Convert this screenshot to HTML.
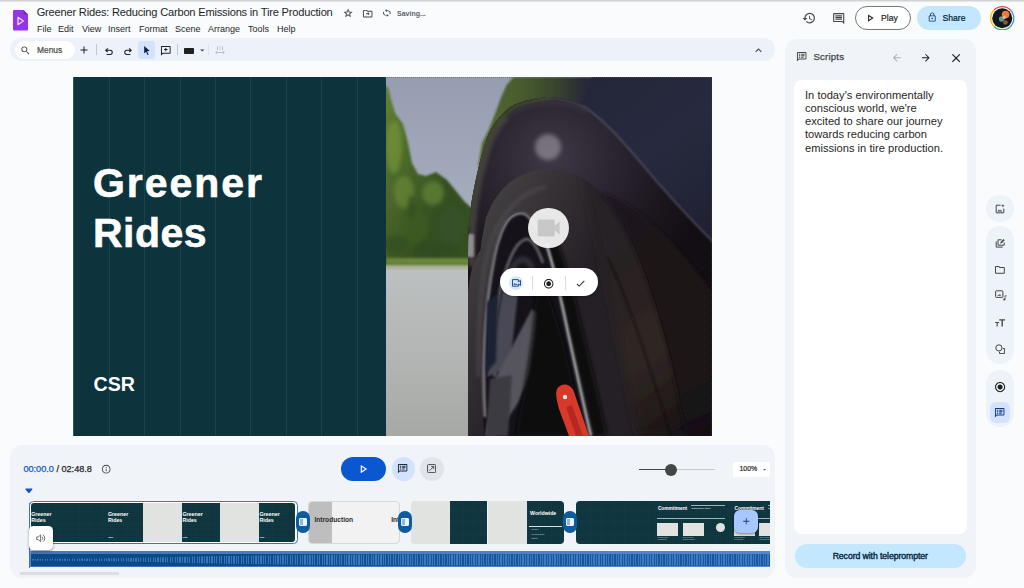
<!DOCTYPE html>
<html lang="en">
<head>
<meta charset="utf-8">
<title>Greener Rides: Reducing Carbon Emissions in Tire Production</title>
<style>
*{box-sizing:border-box;margin:0;padding:0}
html,body{width:1024px;height:588px;overflow:hidden;background:#f9fbfd;font-family:"Liberation Sans",sans-serif;color:#1f1f1f}
.abs{position:absolute}
#app{position:relative;width:1024px;height:588px;overflow:hidden;background:#f9fbfd}
#topline{left:0;top:0;width:1024px;height:2px;background:linear-gradient(180deg,#cfcfcf 0,#d6d6d6 45%,#f1f2f4 100%)}
#title{left:36.7px;top:5.1px;font-size:11.1px;line-height:14px;white-space:nowrap;color:#1f1f1f;letter-spacing:-0.2px}
.menu{top:23.7px;font-size:9px;line-height:11px;color:#1f1f1f;white-space:nowrap}
#toolbar{left:10.3px;top:37.6px;width:764.4px;height:23.4px;border-radius:12px;background:#edf2fa}
#menus{left:15px;top:41px;width:60px;height:18px;border-radius:9px;background:#fff}
#menus span{position:absolute;left:22px;top:3.5px;font-size:8.4px;line-height:11px;color:#444746;-webkit-text-stroke:0.2px #444746}
.sep{width:1px;height:11px;top:44px;background:#c7c7c7}
#cursorbox{left:138px;top:41px;width:17px;height:18px;border-radius:3px;background:#d3e3fd}
#saving{left:397px;top:8.6px;font-size:7px;line-height:10px;color:#5f6368;font-weight:bold;white-space:nowrap}
#play{left:855px;top:6px;width:56px;height:24px;border-radius:12px;border:1px solid #747775;background:#fff}
#play span{position:absolute;left:25px;top:4.8px;font-size:8.6px;-webkit-text-stroke:0.2px #1f1f1f;line-height:12px;color:#1f1f1f}
#share{left:917px;top:6px;width:64px;height:24px;border-radius:12px;background:#c2e7ff}
#share span{position:absolute;left:25.5px;top:5.5px;font-size:8.6px;-webkit-text-stroke:0.2px #001d35;line-height:12px;color:#001d35}
#canvas{left:73px;top:77px;width:638.5px;height:359px;background:#0d343d;overflow:hidden}
#h1{left:20px;top:80.85px;-webkit-text-stroke:0.6px #fff;font-size:41px;line-height:50.5px;font-weight:bold;color:#fff;white-space:nowrap}
#csr{left:20.5px;top:296.1px;font-size:19.6px;line-height:22px;font-weight:bold;color:#fff}
#tl{left:10px;top:445px;width:765px;height:133px;border-radius:12px;background:#f0f4f9}
#sp{left:785px;top:38.7px;width:190.7px;height:539.3px;border-radius:12px;background:#f0f4f9}
#sbox{left:794px;top:80px;width:172.5px;height:454px;border-radius:8px;background:#fff}
#stext{left:805px;top:88.5px;width:160px;white-space:nowrap;font-size:11.15px;line-height:13.3px;color:#1f1f1f}
#rec{left:794.5px;top:544px;width:171.5px;height:24px;border-radius:12px;background:#c2e7ff;text-align:center;font-size:8.7px;letter-spacing:-0.08px;line-height:24px;font-weight:normal;-webkit-text-stroke:0.35px #001d35;color:#001d35}

.clip{top:501.3px;height:42.5px;overflow:hidden}
.dk{position:absolute;top:0;height:100%;background-color:#0d343d;background-image:linear-gradient(90deg,rgba(255,255,255,0.020) 0.5px,transparent 0.5px),linear-gradient(0deg,rgba(255,255,255,0.020) 0.5px,transparent 0.5px);background-size:2.2px 2.2px}
.lt{position:absolute;top:0;height:100%;background:#e1e3e1}
.tt{position:absolute;color:#fff;font-weight:bold;font-size:5.3px;line-height:5.6px;white-space:nowrap}
.tc{position:absolute;color:#fff;font-weight:bold;font-size:2.2px;line-height:3px;white-space:nowrap}
.tr{width:13.8px;height:21.6px;border-radius:6.9px;background:#0d5c9f;top:511.1px}
.tr i{position:absolute;left:3.1px;top:6.7px;width:7.6px;height:8.2px;border:1px solid #eef4fb;border-radius:1px;background:linear-gradient(90deg,#8fb6e0 0,#8fb6e0 55%,#eef4fb 55%,#eef4fb 100%)}
#h1a{letter-spacing:1.95px}#h1b{letter-spacing:0.45px}
</style>
</head>
<body>
<div id="app">
<div id="topline" class="abs"></div>

<div id="sp" class="abs"></div>
<div id="sbox" class="abs"></div>
<!-- header -->
<svg class="abs" style="left:13px;top:10px" width="15" height="21" viewBox="0 0 15 21"><path d="M1.2 0H10.5L15 4.6V19.3a1.2 1.2 0 0 1-1.2 1.2H1.2A1.2 1.2 0 0 1 0 19.300V1.2A1.200 1.200 0 0 1 1.200 0z" fill="#9334e6"/><path d="M10.500 0L15 4.600H10.500z" fill="#7627bb"/><path d="M5 7.400L10.300 11L5 14.600z" fill="none" stroke="#f0d4fb" stroke-width="1.400" stroke-linejoin="round"/></svg>
<div id="title" class="abs">Greener Rides: Reducing Carbon Emissions in Tire Production</div>
<div class="abs menu" style="left:37px">File</div>
<div class="abs menu" style="left:58px">Edit</div>
<div class="abs menu" style="left:82px">View</div>
<div class="abs menu" style="left:108px">Insert</div>
<div class="abs menu" style="left:139px">Format</div>
<div class="abs menu" style="left:175px">Scene</div>
<div class="abs menu" style="left:208px">Arrange</div>
<div class="abs menu" style="left:248px">Tools</div>
<div class="abs menu" style="left:277px">Help</div>
<div id="saving" class="abs">Saving...</div>

<div id="toolbar" class="abs"></div>
<div id="menus" class="abs"><span>Menus</span></div>
<div class="abs sep" style="left:96px"></div>
<div id="cursorbox" class="abs"></div>
<div class="abs sep" style="left:177px"></div>
<div class="abs sep" style="left:208.300px;background:#dde1e8"></div>

<div id="play" class="abs"><span>Play</span></div>
<div id="share" class="abs"><span>Share</span></div>

<svg class="abs" style="left:343.40px;top:8.20px" width="10.2" height="10.2" viewBox="0 0 24 24"><path d="M22 9.240l-7.190-.620L12 2 9.190 8.630 2 9.240l5.460 4.730L5.820 21 12 17.270 18.180 21l-1.630-7.030L22 9.240zM12 15.400l-3.760 2.270 1-4.280-3.320-2.880 4.380-.380L12 6.100l1.710 4.040 4.380.380-3.320 2.880 1 4.280L12 15.400z" fill="#444746" stroke="#444746" stroke-width="0.600"/></svg>
<svg class="abs" style="left:362.10px;top:7.70px" width="11.4" height="11.4" viewBox="0 0 24 24"><path d="M20 6h-8l-2-2H4c-1.100 0-2 .900-2 2v12c0 1.100.900 2 2 2h16c1.100 0 2-.900 2-2V8c0-1.100-.900-2-2-2zm0 12H4V6h5.170l2 2H20v10zm-7.500-2.500l3.500-3.500-3.500-3.500V11H8.500v2h4v2.500z" fill="#444746"/></svg>
<svg class="abs" style="left:380.950px;top:9.400px" width="11.700" height="8.200" viewBox="0 0 24 24" preserveAspectRatio="none"><path d="M12 4V1L8 5l4 4V6c3.310 0 6 2.690 6 6 0 1.010-.250 1.970-.700 2.800l1.460 1.460A7.930 7.930 0 0 0 20 12c0-4.420-3.580-8-8-8zm0 14c-3.310 0-6-2.690-6-6 0-1.010.250-1.970.700-2.800L5.240 7.740A7.930 7.930 0 0 0 4 12c0 4.420 3.580 8 8 8v3l4-4-4-4v3z" fill="#444746"/></svg>
<svg class="abs" style="left:801.50px;top:11.10px" width="14.2" height="14.2" viewBox="0 0 24 24"><path d="M13 3a9 9 0 0 0-9 9H1l3.890 3.890.070.140L9 12H6c0-3.870 3.130-7 7-7s7 3.130 7 7-3.130 7-7 7c-1.930 0-3.680-.790-4.940-2.060l-1.420 1.420A8.954 8.954 0 0 0 13 21a9 9 0 0 0 0-18zm-1 5v5l4.280 2.540.720-1.210-3.500-2.080V8H12z" fill="#444746"/></svg>
<svg class="abs" style="left:831.500px;top:11.600px" width="13.400" height="13.400" viewBox="0 0 24 24"><path d="M21.990 4c0-1.100-.890-2-1.990-2H4c-1.100 0-2 .900-2 2v12c0 1.100.900 2 2 2h14l4 4-.010-18zM20 4v13.170L18.830 16H4V4h16zM6 12h12v2H6zm0-3h12v2H6zm0-3h12v2H6z" fill="#444746"/></svg>
<svg class="abs" style="left:20.20px;top:44.50px" width="11.0" height="11.0" viewBox="0 0 24 24"><path d="M15.500 14h-.790l-.280-.270A6.471 6.471 0 0 0 16 9.500 6.500 6.500 0 1 0 9.500 16c1.610 0 3.090-.590 4.230-1.570l.270.280v.790l5 4.990L20.490 19l-4.990-5zm-6 0C7.010 14 5 11.990 5 9.500S7.010 5 9.500 5 14 7.010 14 9.500 11.990 14 9.500 14z" fill="#444746"/></svg>
<svg class="abs" style="left:78.40px;top:44.00px" width="12.0" height="12.0" viewBox="0 0 24 24"><path d="M19 13h-6v6h-2v-6H5v-2h6V5h2v6h6v2z" fill="#1f1f1f"/></svg>
<svg class="abs" style="left:104.600px;top:47.700px" width="8" height="7" viewBox="0 0 8 7"><path d="M2.700 0.500L0.700 2.300L2.700 4.100M0.800 2.300H5.200A2.050 2.050 0 0 1 5.200 6.400H1.600" fill="none" stroke="#1f1f1f" stroke-width="1.050" stroke-linejoin="round"/></svg>
<svg class="abs" style="left:123.500px;top:47.700px" width="8" height="7" viewBox="0 0 8 7"><path d="M5.300 0.500L7.300 2.300L5.300 4.100M7.200 2.300H2.800A2.050 2.050 0 0 0 2.800 6.400H6.400" fill="none" stroke="#1f1f1f" stroke-width="1.050" stroke-linejoin="round"/></svg>
<svg class="abs" style="left:140.700px;top:45.300px" width="11" height="11" viewBox="0 0 24 24"><path d="M7 2l12 11.200-5.800.500 3.300 7.300-2.200 1-3.200-7.400L7 18.500V2z" fill="#041e49"/></svg>
<svg class="abs" style="left:160.20px;top:44.80px" width="11.6" height="11.6" viewBox="0 0 24 24"><path d="M20 2H4c-1.100 0-2 .900-2 2v18l4-4h14c1.100 0 2-.900 2-2V4c0-1.100-.900-2-2-2zm0 14H5.170L4 17.170V4h16v12zM11 13h2v-2.500h2.500v-2H13V6h-2v2.500H8.500v2H11z" fill="#1f1f1f"/></svg>
<div class="abs" style="left:184px;top:47.700px;width:10px;height:6.200px;background:#1f1f1f;border-radius:0.700px"></div>
<svg class="abs" style="left:196.60px;top:45.00px" width="10.6" height="10.6" viewBox="0 0 24 24"><path d="M7 10l5 5 5-5z" fill="#444746"/></svg>
<svg class="abs" style="left:214.500px;top:45.500px" width="10" height="9" viewBox="0 0 10 9"><path d="M5 0v1.600M5 2.600v1.600M2.500 0.500v3.500M7.500 0.500v3.500M0.800 6.500h8.400M2.300 5l-1.600 1.500 1.600 1.500M7.700 5l1.600 1.500-1.600 1.500" fill="none" stroke="#b4b9c0" stroke-width="0.900"/></svg>
<svg class="abs" style="left:751.60px;top:43.90px" width="13.0" height="13.0" viewBox="0 0 24 24"><path d="M12 8l-6 6 1.410 1.410L12 10.830l4.590 4.580L18 14z" fill="#444746"/></svg>
<svg class="abs" style="left:863.700px;top:12.050px" width="12.200" height="12.200" viewBox="0 0 24 24"><path d="M10 8.640L15.270 12 10 15.360V8.640M8 5v14l11-7L8 5z" fill="#1f1f1f"/></svg>
<svg class="abs" style="left:926.80px;top:12.20px" width="10.4" height="10.4" viewBox="0 0 24 24"><path d="M18 8h-1V6c0-2.760-2.240-5-5-5S7 3.240 7 6v2H6c-1.100 0-2 .900-2 2v10c0 1.100.900 2 2 2h12c1.100 0 2-.900 2-2V10c0-1.100-.900-2-2-2zM9 6c0-1.660 1.340-3 3-3s3 1.340 3 3v2H9V6zm9 14H6V10h12v10zm-6-3c1.100 0 2-.900 2-2s-.900-2-2-2-2 .900-2 2 .900 2 2 2z" fill="#1f3a52"/></svg>
<svg class="abs" style="left:990px;top:5.700px" width="24.500" height="24.500" viewBox="0 0 24.500 24.500">
<defs><clipPath id="cav"><circle cx="12.250" cy="12.250" r="10"/></clipPath></defs>
<circle cx="12.250" cy="12.250" r="11.600" fill="none" stroke="#ea4335" stroke-width="1.200" stroke-dasharray="18.200 54.700" transform="rotate(-135 12.250 12.250)"/>
<circle cx="12.250" cy="12.250" r="11.600" fill="none" stroke="#4285f4" stroke-width="1.200" stroke-dasharray="18.200 54.700" transform="rotate(-45 12.250 12.250)"/>
<circle cx="12.250" cy="12.250" r="11.600" fill="none" stroke="#34a853" stroke-width="1.200" stroke-dasharray="18.200 54.700" transform="rotate(45 12.250 12.250)"/>
<circle cx="12.250" cy="12.250" r="11.600" fill="none" stroke="#fbbc04" stroke-width="1.200" stroke-dasharray="18.200 54.700" transform="rotate(135 12.250 12.250)"/>
<g clip-path="url(#cav)"><rect width="24.500" height="24.500" fill="#15171a"/>
<circle cx="15.600" cy="8.600" r="3.800" fill="#ef7a3d"/><circle cx="11.600" cy="13" r="2.700" fill="#5e9a8c"/><circle cx="15.500" cy="16.500" r="2.300" fill="#8a5a3a"/><circle cx="14.300" cy="11.300" r="1.600" fill="#f2b38f"/></g>
</svg>
<svg class="abs" style="left:796.30px;top:51.30px" width="11.4" height="11.4" viewBox="0 0 24 24"><path d="M20 2H4c-1.100 0-2 .900-2 2v18l4-4h14c1.100 0 2-.900 2-2V4c0-1.100-.900-2-2-2zm0 14H5.170L4 17.170V4h16v12zM6 6h3v2H6zm5 0h7v2h-7zM6 9h3v2H6zm5 0h7v2h-7zM6 12h3v2H6zm5 0h5v2h-5z" fill="#444746"/></svg>
<div class="abs" style="left:813.500px;top:50.800px;font-size:9.700px;line-height:12px;color:#444746;letter-spacing:0.150px;-webkit-text-stroke:0.250px #444746">Scripts</div>
<svg class="abs" style="left:890.60px;top:51.80px" width="11.6" height="11.6" viewBox="0 0 24 24"><path d="M20 11H7.830l5.590-5.590L12 4l-8 8 8 8 1.410-1.410L7.830 13H20v-2z" fill="#a9adb3"/></svg>
<svg class="abs" style="left:920.40px;top:51.80px" width="11.6" height="11.6" viewBox="0 0 24 24"><path d="M12 4l-1.410 1.410L16.170 11H4v2h12.170l-5.580 5.590L12 20l8-8z" fill="#1f1f1f"/></svg>
<svg class="abs" style="left:949.100px;top:50.600px" width="14.200" height="14.200" viewBox="0 0 24 24"><path d="M19 6.410L17.590 5 12 10.590 6.410 5 5 6.410 10.590 12 5 17.590 6.410 19 12 13.410 17.590 19 19 17.590 13.410 12z" fill="#1f1f1f"/></svg>
<div class="abs" style="left:986px;top:195.200px;width:27.700px;height:26.600px;border-radius:13px;background:#eef2f9"></div>
<div class="abs" style="left:986px;top:225.800px;width:27.700px;height:138.400px;border-radius:13.800px;background:#eef2f9"></div>
<div class="abs" style="left:986px;top:370px;width:27.700px;height:56.500px;border-radius:13.800px;background:#eef2f9"></div>
<div class="abs" style="left:989.700px;top:402.200px;width:20px;height:20.600px;border-radius:6px;background:#d3e3fd"></div>
<svg class="abs" style="left:995px;top:203.500px" width="10" height="10" viewBox="0 0 10 10"><path d="M5.600 1.200H1.200v7.600h7.600V4.600" fill="none" stroke="#444746" stroke-width="1"/><path d="M2.400 7.400l1.500-2 1.100 1.300.9-1 1.400 1.700z" fill="#444746"/><path d="M7.900 0l.5 1.300 1.300.5-1.300.5-.5 1.300-.5-1.300-1.300-.5 1.300-.5z" fill="#444746"/></svg>
<svg class="abs" style="left:994.800px;top:237.500px" width="10.500" height="10.500" viewBox="0 0 10.500 10.500"><path d="M6.600 1.800H3v5.400h6.200V4.600" fill="none" stroke="#444746" stroke-width="1"/><path d="M1.200 3.400v5.700h6.500" fill="none" stroke="#444746" stroke-width="1"/><path d="M5.200 5.600l.4-1.500 3-3 1.100 1.100-3 3z" fill="#444746"/></svg>
<svg class="abs" style="left:994.10px;top:263.50px" width="11.8" height="11.8" viewBox="0 0 24 24"><path d="M9.170 6l2 2H20v10H4V6h5.170M10 4H4c-1.100 0-1.990.900-1.990 2L2 18c0 1.100.900 2 2 2h16c1.100 0 2-.900 2-2V8c0-1.100-.900-2-2-2h-8l-2-2z" fill="#444746"/></svg>
<svg class="abs" style="left:994.500px;top:290px" width="12" height="11" viewBox="0 0 12 11"><rect x="0.600" y="0.800" width="7.300" height="6.600" rx="0.800" fill="none" stroke="#444746" stroke-width="1"/><path d="M2.200 5.800h4l-1.300-1.700-1 1.200-.6-.7z" fill="#444746"/><circle cx="9.300" cy="9.500" r="1.100" fill="#444746"/><path d="M10 9.500V5.800h1.600" fill="none" stroke="#444746" stroke-width="0.800"/></svg>
<svg class="abs" style="left:994.600px;top:318.500px" width="10.500" height="8" viewBox="0 0 10.500 8"><path d="M4.200 0.300h6.100v1.300H7.900v6H6.500v-6H4.200z" fill="#444746"/><path d="M0.200 2.900h3.900v1.100H2.700v3.600H1.600V4H0.200z" fill="#444746"/></svg>
<svg class="abs" style="left:994.800px;top:343.500px" width="10.500" height="10.500" viewBox="0 0 10.500 10.500"><circle cx="3.900" cy="3.900" r="3.100" fill="none" stroke="#444746" stroke-width="1"/><path d="M7.800 4.500h1.800v5.100H4.500V7.800" fill="none" stroke="#444746" stroke-width="1"/></svg>
<svg class="abs" style="left:993.70px;top:380.60px" width="12.2" height="12.2" viewBox="0 0 24 24"><path d="M12 7c-2.760 0-5 2.240-5 5s2.240 5 5 5 5-2.240 5-5-2.240-5-5-5zm0-5C6.480 2 2 6.480 2 12s4.480 10 10 10 10-4.480 10-10S17.520 2 12 2zm0 18c-4.420 0-8-3.580-8-8s3.580-8 8-8 8 3.580 8 8-3.580 8-8 8z" fill="#1f1f1f"/></svg>
<svg class="abs" style="left:994.20px;top:406.90px" width="11.4" height="11.4" viewBox="0 0 24 24"><path d="M20 2H4c-1.100 0-2 .900-2 2v18l4-4h14c1.100 0 2-.900 2-2V4c0-1.100-.900-2-2-2zm0 14H5.170L4 17.170V4h16v12zM6 6h3v2H6zm5 0h7v2h-7zM6 9h3v2H6zm5 0h7v2h-7zM6 12h3v2H6zm5 0h5v2h-5z" fill="#0b3a82"/></svg>
<!-- canvas -->
<div id="canvas" class="abs">
<svg id="photo" class="abs" style="left:312.600px;top:0" width="326.5" height="359" viewBox="0 0 326.5 359">
<defs>
<linearGradient id="gsky" x1="0" y1="0" x2="0" y2="1"><stop offset="0" stop-color="#969db1"/><stop offset="0.6" stop-color="#a4abbb"/><stop offset="1" stop-color="#b7bdc7"/></linearGradient>
<linearGradient id="groad" x1="0" y1="0" x2="0" y2="1"><stop offset="0" stop-color="#bcc0c0"/><stop offset="0.5" stop-color="#b3b6b4"/><stop offset="1" stop-color="#a6a8a4"/></linearGradient>
<linearGradient id="gtree" x1="0" y1="0" x2="90" y2="40" gradientUnits="userSpaceOnUse"><stop offset="0" stop-color="#68883300"/><stop offset="0" stop-color="#638331"/><stop offset="0.45" stop-color="#4e6c2c"/><stop offset="1" stop-color="#365022"/></linearGradient>
<radialGradient id="gwell" cx="165" cy="80" r="160" gradientUnits="userSpaceOnUse"><stop offset="0" stop-color="#3f3846"/><stop offset="0.35" stop-color="#2d2733"/><stop offset="0.75" stop-color="#1b151d"/><stop offset="1" stop-color="#130e13"/></radialGradient>
<linearGradient id="gtread" x1="215" y1="170" x2="326" y2="330" gradientUnits="userSpaceOnUse"><stop offset="0" stop-color="#252025"/><stop offset="0.35" stop-color="#2c2423"/><stop offset="0.6" stop-color="#2f2624"/><stop offset="0.85" stop-color="#241c1b"/><stop offset="1" stop-color="#171112"/></linearGradient>
<linearGradient id="gbody" x1="200" y1="0" x2="326" y2="160" gradientUnits="userSpaceOnUse"><stop offset="0" stop-color="#24263a"/><stop offset="0.5" stop-color="#272a3e"/><stop offset="1" stop-color="#1f2032"/></linearGradient>
<linearGradient id="gtire" x1="95" y1="130" x2="205" y2="190" gradientUnits="userSpaceOnUse"><stop offset="0" stop-color="#434042"/><stop offset="0.45" stop-color="#363135"/><stop offset="1" stop-color="#252025"/></linearGradient>
<linearGradient id="gtop" x1="100" y1="0" x2="205" y2="0" gradientUnits="userSpaceOnUse"><stop offset="0" stop-color="#52672f"/><stop offset="0.35" stop-color="#485b2d"/><stop offset="0.65" stop-color="#3a462d"/><stop offset="0.9" stop-color="#2a2d36"/><stop offset="1" stop-color="#26283a"/></linearGradient>
<filter id="b1" x="-20%" y="-20%" width="140%" height="140%"><feGaussianBlur stdDeviation="1"/></filter>
<filter id="b2" x="-20%" y="-20%" width="140%" height="140%"><feGaussianBlur stdDeviation="2.2"/></filter>
<filter id="b4" x="-30%" y="-30%" width="160%" height="160%"><feGaussianBlur stdDeviation="4"/></filter>
<clipPath id="ctire"><path d="M82,359 L82,215 C84,195 88,182 94.500,173 C96,160 98,150 100,141 C104,130 108,123 113.500,116 C120,108 126,103 132.500,100 C142,95 150,92 160,92 C170,92 179,94 187,97 C198,101 207,108 215,116 C232,135 250,170 265,215 C280,260 292,310 300,359 Z"/></clipPath>
<linearGradient id="gtread2" x1="240" y1="150" x2="326" y2="359" gradientUnits="userSpaceOnUse"><stop offset="0" stop-color="#1a141a"/><stop offset="0.5" stop-color="#1f1818"/><stop offset="1" stop-color="#151011"/></linearGradient>
<clipPath id="cphoto"><rect x="0" y="0" width="326.5" height="359"/></clipPath>
<clipPath id="cdark"><path d="M82,359 L82,180 C82,160 83,140 86,122 C90,100 95,78 101,61 C106,48 118,33 129,27.500 C140,23 150,21 163,20 C175,20.500 188,24 196,28 L206,0 L326.500,0 L326.500,359 Z"/></clipPath>
</defs>
<g clip-path="url(#cphoto)">
<rect width="326.500" height="359" fill="#1a1517"/>
<!-- sky -->
<rect x="0" y="0" width="210" height="195" fill="url(#gsky)"/>
<!-- top trees -->
<path d="M127.500,0 L120.600,8 L115,20.500 L109.600,35.500 L103,52 L96,66 L92,90 L120,70 L215,40 L215,0 Z" fill="url(#gtop)" filter="url(#b1)"/>
<!-- left trees -->
<path d="M-4,7 L2,10 L5,22 L9,36 L17,47 L22,66 L26,86 L32,97 L40,99 L50,95 L61,103 L70,114 L78,124 L92,137 L92,196 L-4,196 Z" fill="url(#gtree)" filter="url(#b1)"/>
<g filter="url(#b2)">
<ellipse cx="8" cy="70" rx="8" ry="26" fill="#789639" opacity="0.650"/>
<ellipse cx="18" cy="115" rx="10" ry="16" fill="#6f8e37" opacity="0.600"/>
<ellipse cx="47" cy="116" rx="11" ry="12" fill="#5f8034" opacity="0.800"/>
<ellipse cx="30" cy="150" rx="13" ry="16" fill="#3c5a22" opacity="0.800"/>
<ellipse cx="66" cy="150" rx="12" ry="20" fill="#36522a" opacity="0.850"/>
<ellipse cx="10" cy="168" rx="12" ry="10" fill="#33501e" opacity="0.800"/>
<ellipse cx="50" cy="172" rx="22" ry="8" fill="#2f4a20" opacity="0.800"/>
<ellipse cx="25" cy="130" rx="4" ry="12" fill="#2f4a1c" opacity="0.600"/>
</g>
<!-- grass strip -->
<rect x="0" y="181" width="92" height="7.500" fill="#67863a" filter="url(#b1)"/>
<!-- road -->
<rect x="-2" y="189.500" width="94" height="172" fill="url(#groad)"/>
<rect x="-2" y="188" width="94" height="4" fill="#a9b08f" filter="url(#b1)"/>

<!-- dark vehicle region -->
<g clip-path="url(#cdark)">
<rect width="326.500" height="359" fill="#1b1619"/>
<!-- wheel well -->
<rect width="326.500" height="359" fill="url(#gwell)"/>
<!-- car body top-right -->
<path d="M163,20 C175,20.500 190,25 200,31 C215,41 235,62 255,86 C270,104 300,138 326.500,165 L326.500,0 L200,0 Z" fill="url(#gbody)"/>
<path d="M150,21 C175,19.500 190,25 200,31 C215,41 235,62 255,86 C270,104 300,138 328,166" fill="none" stroke="#5a586a" stroke-width="1.600" filter="url(#b1)" opacity="0.85"/>
<path d="M86,190 C84,150 88,110 103,66 C108,54 114,45 121,39" fill="none" stroke="#4c4846" stroke-width="7" filter="url(#b2)" opacity="0.85"/><path d="M121,39 C132,31 150,26 166,25.500 C180,25.500 192,29 202,35" fill="none" stroke="#3d3940" stroke-width="5" filter="url(#b2)" opacity="0.7"/>
<!-- fender green fringe -->
<path d="M83,150 C84,125 90,95 101,63 C108,48 119,35 130,29 C142,24 152,22.500 165,21.500" fill="none" stroke="#3e4b2a" stroke-width="3" filter="url(#b1)"/>
<!-- tire body -->
<path d="M82,359 L82,215 C84,195 88,182 94.500,173 C96,160 98,150 100,141 C104,130 108,123 113.500,116 C120,108 126,103 132.500,100 C142,95 150,92 160,92 C170,92 179,94 187,97 C198,101 207,108 215,116 C232,135 250,170 265,215 C280,260 292,310 300,359 Z" fill="url(#gtire)"/>
<path d="M93,300 C92,240 95,200 103,172 C112,140 132,115 160,110" fill="none" stroke="#5b585b" stroke-width="2.500" filter="url(#b2)" opacity="0.8"/>
<!-- tread on right -->
<g clip-path="url(#ctire)"><path d="M188,60 C206,140 230,240 252,359 L340,359 L340,60 Z" fill="url(#gtread)" filter="url(#b4)"/></g>
<path d="M215,116 C232,135 250,170 265,215 C280,260 292,310 300,359 L326.500,359 L326.500,215 C300,180 260,130 215,116 Z" fill="url(#gtread2)" filter="url(#b2)"/>
<!-- black band outside rim right edge -->
<path d="M150,140 C160,150 170,175 184,230 C196,280 208,330 214,359" fill="none" stroke="#0d0b0e" stroke-width="14" filter="url(#b2)"/>
<!-- rim face -->
<path d="M98,359 C95,300 98,230 107,182 C110,163 117,144 124,138 C129,134 134,133.500 138,134.500 C146,138 153,150 159,163 C166,180 172,205 182,256 C190,292 198,330 205,359 Z" fill="#15121a"/>
<!-- rim lip highlight -->
<path d="M99,340 C96,290 99,228 108,183 C111,164 118,146 125,140 C130,136 134,135.500 138,136.500 C145,140 151,150 157,163" fill="none" stroke="#8d8c90" stroke-width="2.400" filter="url(#b1)"/>
<!-- barrel arc -->
<path d="M109,300 C107,250 111,215 121,190 C127,172 134,163 141,162 C147,163 152,172 157,186" fill="none" stroke="#6c6b70" stroke-width="3" filter="url(#b1)" opacity="0.85"/>
<path d="M116,250 C116,220 122,198 130,186 C136,179 142,182 147,192" fill="none" stroke="#3b3a40" stroke-width="5" filter="url(#b2)" opacity="0.9"/>
<!-- spokes -->
<path d="M119,205 L134,196 L124,290 L101,300 Z" fill="#4a4955" filter="url(#b1)"/>
<path d="M146,232 L166,246 L132,326 L110,359 L99,359 L110,300 Z" fill="#56545d" filter="url(#b1)"/>
<path d="M101,225 L112,216 L110,285 L100,295 Z" fill="#1d2436" filter="url(#b1)"/>
<path d="M104,302 L126,298 L122,359 L100,359 Z" fill="#3c3a42" filter="url(#b1)"/>
<!-- hub darkness -->
<path d="M150,196 C168,220 184,280 196,359 L130,359 C135,320 150,270 150,196 Z" fill="#0a0810" filter="url(#b2)"/>
<!-- rim right edge bright -->
<path d="M160,166 C166,184 173,212 182,256 C190,292 198,330 205,359" fill="none" stroke="#b6b6b8" stroke-width="2.500" filter="url(#b1)"/>
<!-- caliper -->
<path d="M171,312 C175,305 185,306 188,315 L203,359 L183,359 L173,332 C171,324 169,317 171,312 Z" fill="#d8392a"/><path d="M180,330 L186,328 L197,359 L190,359 Z" fill="#b52a20"/>
<circle cx="179" cy="320" r="2.200" fill="#efe7e2"/>
<!-- reflector -->
<rect x="80.500" y="157" width="7.500" height="23" rx="1" fill="#8e8e92" filter="url(#b1)"/>
<!-- tread groove -->
<path d="M221,180 C235,205 255,260 285,359" fill="none" stroke="#151010" stroke-width="1.200" filter="url(#b1)" opacity="0.8"/>
<!-- lens flare -->
<circle cx="162" cy="70" r="13" fill="#ffffff" opacity="0.300" filter="url(#b2)"/>
</g>
</g>
</svg>
<div class="abs" style="left:35.69px;top:0;width:1px;height:359px;background:rgba(140,190,200,0.110)"></div><div class="abs" style="left:71.13px;top:0;width:1px;height:359px;background:rgba(140,190,200,0.110)"></div><div class="abs" style="left:106.57px;top:0;width:1px;height:359px;background:rgba(140,190,200,0.110)"></div><div class="abs" style="left:142.01px;top:0;width:1px;height:359px;background:rgba(140,190,200,0.110)"></div><div class="abs" style="left:177.45px;top:0;width:1px;height:359px;background:rgba(140,190,200,0.110)"></div><div class="abs" style="left:212.89px;top:0;width:1px;height:359px;background:rgba(140,190,200,0.110)"></div><div class="abs" style="left:248.33px;top:0;width:1px;height:359px;background:rgba(140,190,200,0.110)"></div><div class="abs" style="left:283.77px;top:0;width:1px;height:359px;background:rgba(140,190,200,0.110)"></div><div class="abs" style="left:0;top:0;width:1px;height:359px;background:rgba(160,200,210,0.250)"></div>
  <div id="h1" class="abs"><span id="h1a">Greener</span><br><span id="h1b">Rides</span></div>
  <div id="csr" class="abs">CSR</div>
</div>

<div class="abs" style="left:528.400px;top:207.900px;width:40.400px;height:40.400px;border-radius:21px;background:rgba(244,244,244,0.940)"></div>
<svg class="abs" style="left:533.630px;top:211.100px" width="29.330" height="34" viewBox="0 0 24 24" preserveAspectRatio="none"><path d="M17 10.500V7c0-.550-.450-1-1-1H4c-.550 0-1 .450-1 1v10c0 .550.450 1 1 1h12c.550 0 1-.450 1-1v-3.500l4 3.200v-9.400l-4 3.200z" fill="#c8c8c8"/></svg>
<div class="abs" style="left:499.600px;top:268.300px;width:98.700px;height:28.200px;border-radius:14.100px;background:#fff;box-shadow:0 1px 2px rgba(0,0,0,0.250)"></div>
<div class="abs" style="left:509.200px;top:276.200px;width:14px;height:14px;border-radius:7px;background:#d9e6fb"></div>
<svg class="abs" style="left:511.800px;top:279.300px" width="9" height="7.800" viewBox="0 0 9 7.800"><path d="M0.500 0.600h5.800v2.200l2.200-1.400v5l-2.200-1.400v2.200H0.500z" fill="none" stroke="#0b3a82" stroke-width="0.900" stroke-linejoin="round"/><path d="M1.400 5.800l1.300-1.700 1 1.100.7-.7 1 1.300z" fill="#0b3a82"/></svg>
<div class="abs" style="left:532.200px;top:276px;width:1px;height:13.500px;background:#dadce0"></div>
<svg class="abs" style="left:542.70px;top:277.50px" width="11.4" height="11.4" viewBox="0 0 24 24"><path d="M12 7c-2.760 0-5 2.240-5 5s2.240 5 5 5 5-2.240 5-5-2.240-5-5-5zm0-5C6.480 2 2 6.480 2 12s4.480 10 10 10 10-4.480 10-10S17.520 2 12 2zm0 18c-4.420 0-8-3.580-8-8s3.580-8 8-8 8 3.580 8 8-3.580 8-8 8z" fill="#1f1f1f"/></svg>
<div class="abs" style="left:564.800px;top:276px;width:1px;height:13.500px;background:#dadce0"></div>
<svg class="abs" style="left:574.90px;top:277.90px" width="11" height="11" viewBox="0 0 24 24"><path d="M9 16.170L4.830 12l-1.420 1.410L9 19 21 7l-1.410-1.410z" fill="#1f1f1f"/></svg>
<div class="abs" style="left:385px;top:76.500px;width:327px;height:0;border-top:1px dotted rgba(90,90,90,0.600)"></div>
<div class="abs" style="left:711px;top:77px;width:0;height:359px;border-left:1px dotted rgba(60,60,60,0.600)"></div>
<!-- timeline -->
<div id="tl" class="abs"></div>

<div class="abs" style="left:23.400px;top:462.700px;font-size:9.150px;line-height:12px;white-space:nowrap;color:#1f1f1f;-webkit-text-stroke:0.250px #1f1f1f"><span style="color:#0b57d0;-webkit-text-stroke:0.250px #0b57d0">00:00.0</span> / 02:48.8</div>
<svg class="abs" style="left:101.100px;top:463.500px" width="10.400" height="10.400" viewBox="0 0 24 24"><path d="M11 7h2v2h-2zm0 4h2v6h-2zm1-9C6.480 2 2 6.480 2 12s4.480 10 10 10 10-4.480 10-10S17.520 2 12 2zm0 18c-4.420 0-8-3.580-8-8s3.580-8 8-8 8 3.580 8 8-3.580 8-8 8z" fill="#444746"/></svg>
<div class="abs" style="left:341px;top:456.800px;width:45px;height:23.800px;border-radius:12px;background:#0b57d0"></div>
<svg class="abs" style="left:356.100px;top:461.650px" width="14.200" height="14.200" viewBox="0 0 24 24"><path d="M10 8.640L15.270 12 10 15.360V8.640M8 5v14l11-7L8 5z" fill="#ffffff"/></svg>
<div class="abs" style="left:391.500px;top:457px;width:23.500px;height:23.500px;border-radius:12px;background:#d3e3fd"></div>
<svg class="abs" style="left:397.250px;top:462.900px" width="11.300" height="11.300" viewBox="0 0 24 24"><path d="M20 2H4c-1.100 0-2 .900-2 2v18l4-4h14c1.100 0 2-.900 2-2V4c0-1.100-.900-2-2-2zm0 14H5.170L4 17.170V4h16v12zM6 6h3v2H6zm5 0h7v2h-7zM6 9h3v2H6zm5 0h7v2h-7zM6 12h3v2H6zm5 0h5v2h-5z" fill="#1f2a44"/></svg>
<div class="abs" style="left:420px;top:457px;width:23.500px;height:23.500px;border-radius:12px;background:#e1e5ea"></div>
<svg class="abs" style="left:427.200px;top:464.200px" width="9.200" height="9.200" viewBox="0 0 9.500 9.500"><rect x="0.600" y="0.600" width="8.300" height="8.300" rx="0.800" fill="none" stroke="#444746" stroke-width="1"/><path d="M2.600 6.900L6.900 2.600M4.300 2.600h2.600v2.600" fill="none" stroke="#444746" stroke-width="0.900"/></svg>
<div class="abs" style="left:638.600px;top:468.700px;width:33px;height:1.200px;background:#444746"></div>
<div class="abs" style="left:671px;top:468.800px;width:44px;height:1px;background:#c4c7c5"></div>
<div class="abs" style="left:665.200px;top:463.600px;width:12px;height:12px;border-radius:6px;background:#444746"></div>
<div class="abs" style="left:732.700px;top:461.500px;width:37px;height:15.500px;border-radius:2px;background:#fff"></div>
<div class="abs" style="left:739.500px;top:464px;font-size:6.900px;line-height:10px;color:#1f1f1f;-webkit-text-stroke:0.200px #1f1f1f;white-space:nowrap">100%</div>
<svg class="abs" style="left:761.30px;top:466.10px" width="7.0" height="7.0" viewBox="0 0 24 24"><path d="M7 10l5 5 5-5z" fill="#444746"/></svg>
<svg class="abs" style="left:24.900px;top:488.300px" width="7.800" height="5.600" viewBox="0 0 9 6"><path d="M1 0.400h7a0.600 0.600 0 0 1 .45 1L5 5.400a0.700 0.700 0 0 1-1 0L0.550 1.400A0.600 0.600 0 0 1 1 0.400z" fill="#0b57d0"/></svg>
<div class="abs" style="left:28.500px;top:503px;width:1.300px;height:64.500px;background:#3f6fd0"></div>
<div class="abs" style="left:28.500px;top:500.700px;width:269px;height:43.800px;border:1.300px solid #3f6fd0;border-radius:4.500px;background:#fff"></div>
<div class="abs clip" style="left:30.600px;width:264.800px;border-radius:3px;top:502.700px;height:39.600px"><div class="dk" style="left:0;width:112.200px"></div><div class="lt" style="left:112.200px;width:39px"></div><div class="dk" style="left:151.200px;width:37.800px"></div><div class="lt" style="left:189px;width:39.200px"></div><div class="dk" style="left:228.200px;width:36.600px"></div><div class="tt" style="left:0.6px;top:9.600px">Greener<br>Rides</div><div class="tc" style="left:0.8999999999999999px;top:33.400px">CSR</div><div class="tt" style="left:77.3px;top:9.600px">Greener<br>Rides</div><div class="tc" style="left:77.6px;top:33.400px">CSR</div><div class="tt" style="left:151.8px;top:9.600px">Greener<br>Rides</div><div class="tc" style="left:152.10000000000002px;top:33.400px">CSR</div><div class="tt" style="left:228.8px;top:9.600px">Greener<br>Rides</div><div class="tc" style="left:229.10000000000002px;top:33.400px">CSR</div></div>
<div class="abs clip" style="left:308.200px;width:91.400px;border-radius:4px;background:#f1f2f1;border:0.600px solid #d8dad8"><div style="position:absolute;left:0;top:0;width:22.600px;height:100%;background:#bdbebd"></div><div class="abs" style="left:5.200px;top:13.200px;font-size:6.650px;line-height:9px;font-weight:bold;color:#2b2b2b;white-space:nowrap">Introduction</div><div class="abs" style="left:82px;top:13.200px;font-size:6.650px;line-height:9px;font-weight:bold;color:#2b2b2b;white-space:nowrap">Introduction</div></div>
<div class="abs clip" style="left:410.500px;width:153.200px;border-radius:4px"><div class="lt" style="left:0;width:39.800px"></div><div class="dk" style="left:39.800px;width:37.200px"></div><div class="lt" style="left:77px;width:39.200px"></div><div class="dk" style="left:116.200px;width:37px"></div><div class="tt" style="left:119.600px;top:9.400px;font-size:5.200px">Worldwide</div><div style="position:absolute;left:118.600px;top:24.300px;width:33px;height:0.600px;background:#d9e2e3"></div><div class="tc" style="left:121px;top:26.200px;font-size:2.300px;line-height:4.250px;font-weight:normal;color:#cfd8da">Quality<br>Performance<br>Safety</div></div>
<div class="abs clip" style="left:575.900px;width:194.100px;border-radius:4px 0 0 4px"><div class="dk" style="left:0;width:100%"></div><div class="tt" style="left:82px;top:5px;font-size:4.800px">Commitment</div><div style="position:absolute;left:115.3px;top:3.700px;width:34px;height:0.500px;background:#9fb3b6"></div><div class="tc" style="left:115.5px;top:5.800px;font-weight:normal;font-size:2.400px">Sustainable future</div><div style="position:absolute;left:81.5px;top:16.700px;width:68px;height:0.600px;background:#9fb3b6"></div><div style="position:absolute;left:81.3px;top:21.900px;width:21.200px;height:12.600px;background:#e1e3e1"></div><div style="position:absolute;left:106.7px;top:21.900px;width:21.400px;height:12.600px;background:#e1e3e1"></div><div style="position:absolute;left:140.6px;top:21.600px;width:8.800px;height:8.800px;border-radius:5px;background:#e1e3e1"></div><div class="tc" style="left:81.5px;top:34.600px;font-weight:normal;font-size:2px;line-height:2.600px;color:#b9c6c8">Responsible<br>production</div><div class="tc" style="left:107px;top:34.600px;font-weight:normal;font-size:2px;line-height:2.600px;color:#b9c6c8">Eco-friendly<br>transportation</div><div class="tt" style="left:158.6px;top:5px;font-size:4.800px">Commitment</div><div style="position:absolute;left:191.89999999999998px;top:3.700px;width:34px;height:0.500px;background:#9fb3b6"></div><div class="tc" style="left:192.1px;top:5.800px;font-weight:normal;font-size:2.400px">Sustainable future</div><div style="position:absolute;left:158.1px;top:16.700px;width:68px;height:0.600px;background:#9fb3b6"></div><div style="position:absolute;left:157.9px;top:21.900px;width:21.200px;height:12.600px;background:#e1e3e1"></div><div style="position:absolute;left:183.29999999999998px;top:21.900px;width:21.400px;height:12.600px;background:#e1e3e1"></div><div style="position:absolute;left:217.2px;top:21.600px;width:8.800px;height:8.800px;border-radius:5px;background:#e1e3e1"></div><div class="tc" style="left:158.1px;top:34.600px;font-weight:normal;font-size:2px;line-height:2.600px;color:#b9c6c8">Responsible<br>production</div><div class="tc" style="left:183.6px;top:34.600px;font-weight:normal;font-size:2px;line-height:2.600px;color:#b9c6c8">Eco-friendly<br>transportation</div></div>
<div class="abs tr" style="left:296.4px"><i></i></div>
<div class="abs tr" style="left:398.4px"><i></i></div>
<div class="abs tr" style="left:563.3px"><i></i></div>
<div class="abs" style="left:734.300px;top:509.500px;width:23.400px;height:23.200px;border-radius:6px;background:#a8c7fa;box-shadow:0 1px 2px rgba(0,0,0,0.3),0 1px 3px 1px rgba(0,0,0,0.12)"></div>
<svg class="abs" style="left:740.75px;top:515.85px" width="10.5" height="10.5" viewBox="0 0 24 24"><path d="M19 13h-6v6h-2v-6H5v-2h6V5h2v6h6v2z" fill="#1d3b6e"/></svg>
<div class="abs" style="left:29.800px;top:551.200px;width:740.200px;height:16.300px;background:linear-gradient(90deg,#0b4a87 0,#0b4a87 30%,#18549c 60%,#1b57a0 100%);overflow:hidden">
<div style="position:absolute;left:0;top:0;width:100%;height:100%;background:repeating-linear-gradient(90deg,rgba(78,140,215,0.680) 0,rgba(78,140,215,0.680) 1.200px,transparent 1.200px,transparent 2.450px);-webkit-clip-path:polygon(0 48.500%,12% 44%,23% 32%,36% 23%,50% 19%,100% 18%,100% 88%,50% 87%,36% 83%,23% 74%,12% 62%,0 57.500%);clip-path:polygon(0 48.500%,12% 44%,23% 32%,36% 23%,50% 19%,100% 18%,100% 88%,50% 87%,36% 83%,23% 74%,12% 62%,0 57.500%)"></div>
<div style="position:absolute;left:0;top:0;width:100%;height:2.600px;background:linear-gradient(90deg,#4676b6,#5587cc)"></div>
<div style="position:absolute;left:0;bottom:0;width:100%;height:1.400px;background:linear-gradient(90deg,#3a6db4,#5a8ad0)"></div>
<div style="position:absolute;left:0;top:0;width:1px;height:100%;background:#5a86c8"></div>
</div>
<div class="abs" style="left:29px;top:526.400px;width:23.600px;height:23.600px;border-radius:4.500px;background:#fff;box-shadow:0 1px 2px rgba(0,0,0,0.280),0 1px 3px 1px rgba(0,0,0,0.100)"></div>
<svg class="abs" style="left:36px;top:534.300px" width="9.500" height="8.600" viewBox="0 0 9.500 8.600"><path d="M0.600 3h1.700L4.600 0.900v6.800L2.300 5.600H0.600z" fill="none" stroke="#5f6368" stroke-width="0.900" stroke-linejoin="round"/><path d="M6 2.700a2.200 2.200 0 0 1 0 3.200M7 0.800a4.300 4.300 0 0 1 0 7" fill="none" stroke="#5f6368" stroke-width="0.900"/></svg>
<div class="abs" style="left:19.500px;top:571.600px;width:99px;height:3.900px;border-radius:1px;background:#dcdee2"></div>
<!-- scripts panel -->
<div id="stext" class="abs">In today's environmentally<br>conscious world, we're<br>excited to share our journey<br>towards reducing carbon<br>emissions in tire production.</div>
<div id="rec" class="abs"><span id="rect">Record with teleprompter</span></div>

</div>
</body>
</html>
